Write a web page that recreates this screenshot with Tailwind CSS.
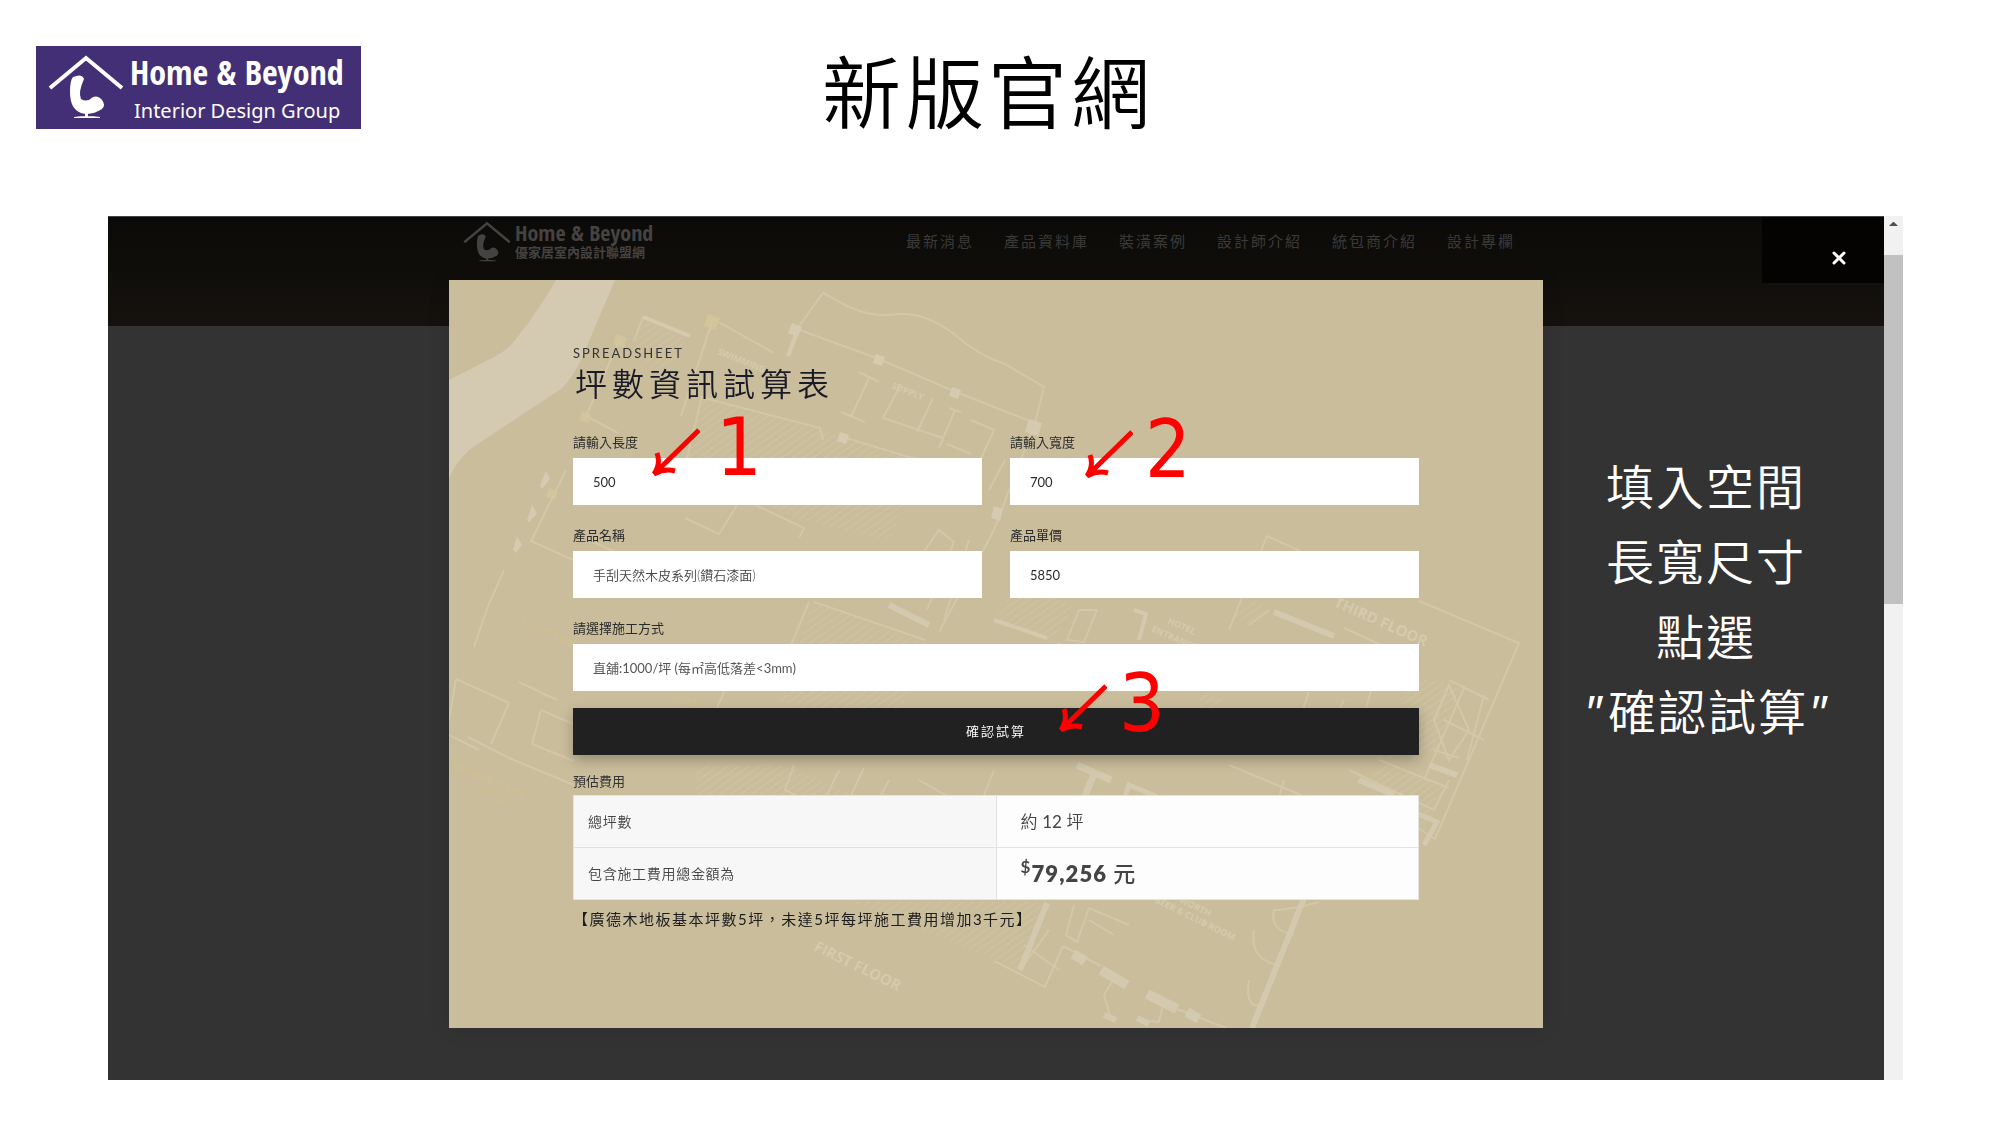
<!DOCTYPE html>
<html lang="zh-Hant">
<head>
    <meta charset="UTF-8">
    <meta name="viewport" content="width=device-width, initial-scale=1.0">
    <title>新版官網</title>
    <script src="https://cdn.jsdelivr.net/npm/@tailwindcss/browser@4"></script>
</head>
<body class="bg-white text-black font-['Lato','Noto_Sans_CJK_TC',sans-serif]">

    <!-- Page header -->
    <header class="grid grid-cols-[1fr_auto_1fr] items-start pl-9 pr-15 pt-[46px] h-[216px]">
        <a href="#" class="flex items-center w-[325px] h-[83px] bg-[#432f75] text-white">
            <svg class="ml-3 w-[76px] h-[68px]" viewBox="0 0 76 68" aria-hidden="true">
                <path d="M2 34 L38 4 L74 34" fill="none" stroke="currentColor" stroke-width="4"/>
                <path d="M25 23 Q34 19 36 25 Q30 38 33 45 Q39 49 45 43 Q50 41 54 46 Q58 51 54 55 Q43 62 33 59 Q22 55 22 38 Q22 26 25 23Z" fill="currentColor"/>
                <path d="M37 59 h3 v4 h-3z M26 63 Q39 61 52 63 V64 H26Z" fill="currentColor"/>
            </svg>
            <span class="flex flex-col pl-1.5 pt-1">
                <span class="text-[34px] leading-[38px] font-extrabold whitespace-nowrap font-['Liberation_Sans_Narrow','Open_Sans_Condensed','Roboto_Condensed','DejaVu_Sans_Condensed',sans-serif]">Home &amp; Beyond</span>
                <span class="pl-1 pt-1 text-[20px] leading-[32px] whitespace-nowrap font-['Noto_Sans',sans-serif]">Interior Design Group</span>
            </span>
        </a>
        <h1 class="text-[79px] leading-[94px] tracking-[4px] font-[350] whitespace-nowrap">新版官網</h1>
    </header>

    <main class="flex pl-27 pr-[97px]">
        <div class="relative flex-1 bg-[#333333]">

            <!-- Dimmed site header -->
            <div class="relative h-[110px] bg-linear-to-b from-[#0b0a08] to-[#15120e] border-t border-[#444]">
                <div class="max-w-[1094px] mx-auto pl-3.5 pr-[28px] pt-0.5 flex items-center justify-between text-[#444342]">
                    <a href="#" class="flex items-center gap-1">
                        <svg class="w-12 h-11" viewBox="0 0 76 68" aria-hidden="true">
                            <path d="M2 36 L38 6 L74 36" fill="none" stroke="currentColor" stroke-width="4"/>
                            <path d="M25 25 Q34 21 36 27 Q30 40 33 47 Q39 51 45 45 Q50 43 54 48 Q58 53 54 57 Q43 64 33 61 Q22 57 22 40 Q22 28 25 25Z" fill="currentColor"/>
                            <path d="M37 61 h3 v3 h-3z M26 65 Q39 62 52 65 V66 H26Z" fill="currentColor"/>
                        </svg>
                        <span class="flex flex-col">
                            <span class="text-[22px] leading-[22px] font-extrabold whitespace-nowrap font-['Liberation_Sans_Narrow','Open_Sans_Condensed','Roboto_Condensed','DejaVu_Sans_Condensed',sans-serif]">Home &amp; Beyond</span>
                            <span class="text-[13px] leading-[18px] font-bold whitespace-nowrap">優家居室內設計聯盟網</span>
                        </span>
                    </a>
                    <nav class="flex gap-[30px] text-[15px] leading-6 tracking-[2px] text-[#3b3a39] whitespace-nowrap">
                        <a href="#">最新消息</a>
                        <a href="#">產品資料庫</a>
                        <a href="#">裝潢案例</a>
                        <a href="#">設計師介紹</a>
                        <a href="#">統包商介紹</a>
                        <a href="#">設計專欄</a>
                    </nav>
                </div>
                <button type="button" aria-label="關閉" class="absolute right-0 top-0 w-[122px] h-[66px] bg-[#050301] flex items-center justify-center pl-8 pt-4">
                    <svg class="w-4 h-4" viewBox="0 0 16 16"><path d="M3 3 L13 13 M13 3 L3 13" stroke="#fff" stroke-width="3" stroke-linecap="round"/></svg>
                </button>
            </div>

            <!-- Calculator dialog -->
            <div class="relative -mt-[46px] mb-[52px] max-w-[1094px] mx-auto bg-[#cabd9c] px-[124px] pt-[63px] pb-24 shadow-[0_0_20px_rgba(0,0,0,0.12)]">

                <!-- Floor plan -->
                <svg class="absolute inset-0 w-full h-full" viewBox="0 0 1094 748" preserveAspectRatio="xMidYMid slice" aria-hidden="true">
                    <defs>
                        <pattern id="hatch" width="6" height="6" patternUnits="userSpaceOnUse" patternTransform="rotate(55)">
                            <path d="M0 0 V6" stroke="#d3c8a6" stroke-width="1.5"/>
                        </pattern>
                    </defs>
                    <path d="M107 0 H166 L135 73 Q125 97 112 109 Q60 143 20 170 Q6 184 0 198 V100 L39 80 Q60 70 67 59 Q90 30 107 0Z" fill="#d4cab2"/>
                    <g fill="url(#hatch)" opacity="0.8">
                        <path d="M194 40 L238 58 L218 92 L178 74Z"/>
                        <path d="M253 116 L371 150 L475 182 L440 262 L340 236 L236 186Z"/>
                        <path d="M365 322 L440 350 L478 365 L440 460 L330 420Z"/>
                        <path d="M568 305 L625 325 L605 362 L545 340Z"/>
                        <path d="M250 485 L335 485 L420 520 L500 560 L240 560Z"/>
                        <path d="M400 622 L598 622 L571 690 L500 660Z"/>
                        <path d="M965 395 L1010 408 L990 470 L930 480Z"/>
                        <path d="M935 485 L1000 505 L975 550 L920 500Z"/>
                        <path d="M755 412 L775 420 L765 435 L744 430Z"/>
                        <path d="M800 320 L818 325 L802 345 L785 335Z"/>
                    </g>
                    <g fill="none" stroke="#d5cbab" stroke-width="2" opacity="0.75">
                        <path d="M374 13 L400 27 Q425 38 450 34 Q478 33 505 54 Q530 76 556 84 L595 107 L586 143"/>
                        <path d="M374 13 L348 49 M348 49 L430 79 L507 112 L586 143 M586 143 L545 250 L490 352"/>
                        <path d="M185 61 L194 37 M171 59 L137 136 L169 153 M264 39 L232 136 M264 39 L325 73 M253 116 L236 186"/>
                        <path d="M410 92 L430 102 M420 98 L402 137 M392 132 L416 142 M452 104 L434 138 L494 158 M484 118 L468 152 M500 128 L512 132 M506 130 L490 168 M498 164 L522 174 M522 140 L545 150 L520 205 L498 195"/>
                        <path d="M255 118 L371 148 L374 160 M394 157 L476 182 M236 238 L270 254 L290 222 M300 222 L355 248 L350 258"/>
                        <path d="M117 190 L82 261 L124 280 M55 290 L39 326 L25 367 M140 260 L205 290 M360 322 L340 370"/>
                        <path d="M7 399 L60 423 L42 464 M7 399 L0 440 M19 457 L60 478 L125 505 M92 430 L83 464 L125 481 M70 402 L108 420 M92 430 L124 444 M0 455 L30 470"/>
                        <path d="M280 400 L250 470 M365 322 L476 360 M476 270 L490 250 L505 262 L478 330 M520 260 L495 340 M500 300 L530 312 M540 210 L556 180"/>
                        <path d="M345 485 L336 510 L372 528 L390 490 M415 488 L402 515 L425 528 L440 500 M470 500 L505 520 M545 490 L535 515 L610 548"/>
                        <path d="M780 350 L818 256 L862 276 M970 321 L1070 363 L986 559 L966 546 M820 330 L800 345 M895 348 L930 364"/>
                        <path d="M860 412 L840 470 M895 420 L870 475 M925 400 L905 470 M1000 400 L1040 420 M1016 406 L975 500 M985 470 L1010 478 M995 440 L1035 460 M1000 405 L1020 450 L1000 480 L985 440Z M1035 415 L1018 480 M930 480 L1000 508"/>
                        <path d="M780 485 L900 535 M835 500 L825 535 M900 490 L985 530 L1000 500"/>
                        <path d="M545 681 L596 707 L614 666 M571 690 L600 650 M575 665 L610 690 M625 625 L617 655 L628 662 L640 628 L680 645 M640 640 L665 655 M870 622 Q840 630 825 630 Q820 650 845 655 M805 650 Q800 680 830 685 M800 700 Q795 730 815 725"/>
                        <path d="M614 666 L652 686 M728 729 L777 748 M666 697 L655 715 L662 738 M714 725 L710 742 L690 740 M630 330 L618 360 L635 362 L648 330Z"/>
                    </g>
                    <g fill="none" stroke="#d5cbb0" stroke-width="6" opacity="0.9">
                        <path d="M348 52 L339 76 M194 37 L241 56" stroke-width="4"/>
                        <path d="M545 340 L598 358 M608 364 L630 374 M685 330 L697 334 L690 360" stroke-width="4"/>
                        <path d="M825 332 L885 356 M440 325 L480 345" stroke-width="6"/>
                        <path d="M598 623 L571 690 M855 618 L803 748" stroke-width="6"/>
                        <path d="M628 485 L662 500 M645 494 L630 530" stroke-width="7"/>
                        <path d="M672 528 L680 505 L735 528 M960 530 L988 542 L975 565" stroke-width="5"/>
                        <path d="M652 690 L678 705 M698 714 L728 729 M624 674 L636 681 M738 732 L750 739" stroke-width="10"/>
                        <path d="M910 500 L945 515 M655 735 L667 740 M688 738 L700 744 M980 485 L1008 495"/>
                    </g>
                    <g fill="#d5cbb0">
                        <path d="M343 43 l10 4 -4 10 -10 -4z M427 74 l9 3 -3 9 -9 -3z M503 107 l9 3 -3 9 -9 -3z M391 152 l9 3 -3 9 -9 -3z M580 139 l13 4 -4 13 -13 -4z M545 226 l9 3 -3 12 -9 -3z"/>
                        <path d="M91 205 l6 -14 4 8 -8 10z M78 240 l5 -15 5 9 -8 8z M64 270 l4 -14 5 9 -6 8z"/>
                    </g>
                    <g fill="#d3c79c" opacity="0.8">
                        <path d="M259 34 l12 4 -4 12 -12 -4z M167 54 l11 4 -3 10 -11 -4z M133 131 l9 3 -3 9 -9 -3z M100 208 l9 3 -3 9 -9 -3z"/>
                    </g>
                    <g fill="#d4caac" class="font-['Open_Sans',sans-serif] font-bold text-[9px]">
                        <text x="364" y="670" transform="rotate(26 364 670)" class="text-[15px]">FIRST FLOOR</text>
                        <text x="884" y="326" transform="rotate(24 884 326)" class="text-[15px]">THIRD FLOOR</text>
                        <text x="718" y="343" transform="rotate(24 718 343)">HOTEL</text>
                        <text x="702" y="351" transform="rotate(24 702 351)">ENTRANCE</text>
                        <text x="268" y="74" transform="rotate(22 268 74)">SWIMMING</text>
                        <text x="442" y="108" transform="rotate(22 442 108)">SUPPLY</text>
                        <text x="730" y="622" transform="rotate(26 730 622)">WORTH</text>
                        <text x="705" y="622" transform="rotate(26 705 622)">BEER &amp; CLUB ROOM</text>
                    </g>
                    <g fill="#cfc291" opacity="0.7" class="font-['Open_Sans',sans-serif] font-bold text-[10px]">
                        <text x="72" y="345" transform="rotate(24 72 345)">COURTYARD</text>
                        <text x="2" y="487" transform="rotate(24 2 487)">BREWMEISTER'S</text>
                        <text x="24" y="510" transform="rotate(24 24 510)">OFFICE</text>
                        <text x="224" y="420" transform="rotate(20 224 420)">PLAN</text>
                    </g>
                </svg>

                <form class="relative" onsubmit="event.preventDefault()">
                    <p class="text-[13px] leading-5 tracking-[2px] text-[#333]">SPREADSHEET</p>
                    <h2 class="pl-0.5 text-[32px] leading-[42px] tracking-[5px] font-[350] text-[#1b1b27]">坪數資訊試算表</h2>

                    <div class="mt-[27px] grid grid-cols-2 gap-x-7 gap-y-5 text-[13px] leading-5 text-[#2b2b2b]">
                        <div>
                            <label for="length" class="block mb-1.5">請輸入長度</label>
                            <input id="length" type="text" value="500" class="block w-full h-[47px] px-5 bg-white">
                        </div>
                        <div>
                            <label for="width" class="block mb-1.5">請輸入寬度</label>
                            <input id="width" type="text" value="700" class="block w-full h-[47px] px-5 bg-white">
                        </div>
                        <div>
                            <label for="product" class="block mb-1.5">產品名稱</label>
                            <select id="product" class="block appearance-none w-full h-[47px] px-5 bg-white font-[350] text-[#444]">
                                <option>手刮天然木皮系列(鑽石漆面)</option>
                            </select>
                        </div>
                        <div>
                            <label for="price" class="block mb-1.5">產品單價</label>
                            <input id="price" type="text" value="5850" class="block w-full h-[47px] px-5 bg-white">
                        </div>
                        <div class="col-span-2">
                            <label for="method" class="block mb-1.5">請選擇施工方式</label>
                            <select id="method" class="block appearance-none w-full h-[47px] px-5 bg-white text-[#555]">
                                <option>直舖:1000/坪 (每㎡高低落差&lt;3mm)</option>
                            </select>
                        </div>
                    </div>

                    <button type="submit" class="mt-[17px] block w-full h-[47px] bg-[#212121] text-white text-[13px] font-[350] tracking-[2px] shadow-[0_5px_12px_rgba(0,0,0,0.25)]">確認試算</button>

                    <table class="mt-4 w-full table-fixed border-collapse text-[#444]">
                        <caption class="pb-1 text-left text-[13px] leading-5 text-[#333]">預估費用</caption>
                        <tr class="h-13 border border-[#e3e3e3]">
                            <th scope="row" class="pl-3.5 bg-[#f7f7f7] border-r border-[#e3e3e3] text-left text-[14px] font-[350] tracking-wider">總坪數</th>
                            <td class="pl-6 bg-[#fdfdfd] text-[17px] font-[350]">約 <span class="font-normal">12</span> 坪</td>
                        </tr>
                        <tr class="h-13 border border-[#e3e3e3]">
                            <th scope="row" class="pl-3.5 bg-[#f7f7f7] border-r border-[#e3e3e3] text-left text-[14px] font-[350] tracking-wider">包含施工費用總金額為</th>
                            <td class="pl-6 bg-[#fdfdfd] text-[22px] leading-[30px] font-extrabold tracking-wider"><sup class="text-[17px] font-bold">$</sup>79,256 <span class="font-medium">元</span></td>
                        </tr>
                    </table>
                    <p class="mt-1.5 text-[15px] leading-[26px] tracking-widest text-[#1c1c1c]">【廣德木地板基本坪數5坪，未達5坪每坪施工費用增加3千元】</p>
                </form>

                <!-- Step markers -->
                <div class="absolute left-[203px] top-32 flex items-end gap-4 text-[#ff0000] pointer-events-none">
                    <svg class="w-12 h-12 mb-3" viewBox="0 0 48 48" fill="none" stroke="currentColor" stroke-width="5"><path d="M47 2 L2 46 M5 25 Q9 36 2 46 Q13 40 23 43"/></svg>
                    <span class="text-[80px] leading-[80px] font-['DejaVu_Sans_Condensed','DejaVu_Sans',sans-serif]">1</span>
                </div>
                <div class="absolute left-[636px] top-[130px] flex items-end gap-3 text-[#ff0000] pointer-events-none">
                    <svg class="w-12 h-12 mb-3" viewBox="0 0 48 48" fill="none" stroke="currentColor" stroke-width="5"><path d="M47 2 L2 46 M5 25 Q9 36 2 46 Q13 40 23 43"/></svg>
                    <span class="text-[80px] leading-[80px] font-['DejaVu_Sans_Condensed','DejaVu_Sans',sans-serif]">2</span>
                </div>
                <div class="absolute left-[610px] top-96 flex items-end gap-3 text-[#ff0000] pointer-events-none">
                    <svg class="w-12 h-12 mb-3" viewBox="0 0 48 48" fill="none" stroke="currentColor" stroke-width="5"><path d="M47 2 L2 46 M5 25 Q9 36 2 46 Q13 40 23 43"/></svg>
                    <span class="text-[80px] leading-[80px] font-['DejaVu_Sans_Condensed','DejaVu_Sans',sans-serif]">3</span>
                </div>
            </div>

            <p class="absolute right-9 top-[233px] w-[284px] text-center text-white text-[48px] leading-[75px] tracking-[2px] font-[350] whitespace-nowrap font-['Noto_Sans','Noto_Sans_CJK_TC',sans-serif]">填入空間<br>長寬尺寸<br>點選<br><i class="mr-1 font-normal">"</i>確認試算<i class="font-normal">"</i></p>
        </div>

        <!-- Scrollbar -->
        <div class="w-[19px] bg-[#f1f1f1] pt-1.5" aria-hidden="true">
            <svg class="mx-auto w-[9px] h-1" viewBox="0 0 9 4"><path d="M0 4 L4 0 H5 L9 4Z" fill="#505050"/></svg>
            <div class="mt-[29px] h-[349px] bg-[#c1c1c1]"></div>
        </div>
    </main>
</body>
</html>
